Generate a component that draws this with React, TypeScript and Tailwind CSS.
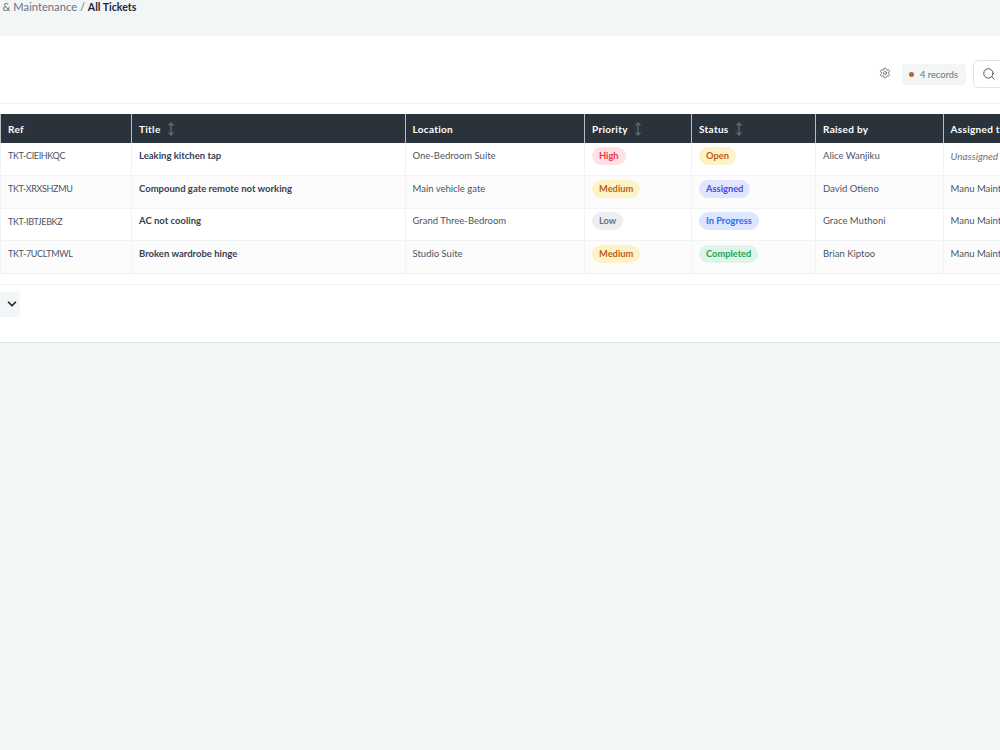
import { ChevronDown, Search, Settings } from 'lucide-react';

type Ticket = {
    ref: string;
    title: string;
    location: string;
    priority: string;
    status: string;
    raisedBy: string;
    assigned: string;
};

const tickets: Ticket[] = [
    { ref: 'TKT-CIEIHKQC', title: 'Leaking kitchen tap', location: 'One-Bedroom Suite', priority: 'High', status: 'Open', raisedBy: 'Alice Wanjiku', assigned: 'Unassigned' },
    { ref: 'TKT-XRXSHZMU', title: 'Compound gate remote not working', location: 'Main vehicle gate', priority: 'Medium', status: 'Assigned', raisedBy: 'David Otieno', assigned: 'Manu Maintenance' },
    { ref: 'TKT-IBTJEBKZ', title: 'AC not cooling', location: 'Grand Three-Bedroom', priority: 'Low', status: 'In Progress', raisedBy: 'Grace Muthoni', assigned: 'Manu Maintenance' },
    { ref: 'TKT-7UCLTMWL', title: 'Broken wardrobe hinge', location: 'Studio Suite', priority: 'Medium', status: 'Completed', raisedBy: 'Brian Kiptoo', assigned: 'Manu Maintenance' },
];

const badgeColors: Record<string, string> = {
    High: 'bg-[#fee2e5] text-[#ef3348]',
    Medium: 'bg-[#fef3c7] text-[#b8621a]',
    Low: 'bg-[#eceef1] text-[#6b7280]',
    Open: 'bg-[#fef3c7] text-[#b8621a]',
    Assigned: 'bg-[#e2e5ff] text-[#4f46e5]',
    'In Progress': 'bg-[#dbe7fe] text-[#2f6bf0]',
    Completed: 'bg-[#dff5e7] text-[#1fa34f]',
};

const Badge = (props: { label: string }) => (
    <span className={`inline-block h-[18px] rounded-full px-[7px] align-middle text-[9.3px] leading-[18px] font-bold ${badgeColors[props.label]}`}>
        {props.label}
    </span>
);

const SortIcon = () => (
    <svg viewBox="0 0 8 14" className="h-[14px] w-[8px] text-[#5f6770]" fill="none" stroke="currentColor" strokeWidth="1.4">
        <path d="M4 1v12M1.5 3.5 4 1l2.5 2.5M1.5 10.5 4 13l2.5-2.5" />
    </svg>
);

const Head = (props: { label: string; sort?: boolean }) => (
    <th className="border-x border-[#b9bec4] px-[7px] pt-[1px] text-left align-middle text-[10px] font-bold tracking-[0.3px] text-white">
        <span className="flex items-center gap-[6px] whitespace-nowrap">
            {props.label}
            {props.sort && <SortIcon />}
        </span>
    </th>
);

const cell = 'border-x border-[#f1f3f5] px-[7px] pb-[6px] align-middle text-[9.5px] whitespace-nowrap text-[#4b5563]';

export default function App() {
    return (
        <div className="h-[750px] w-[1000px] overflow-hidden bg-[#f2f6f7] font-['Lato',sans-serif]">
            <div className="flex h-[36px] items-start text-[11.2px] leading-[14px] whitespace-nowrap">
                <span className="-ml-[45px] text-[#6b7280]">Requests &amp; Maintenance&nbsp;/&nbsp;</span>
                <span className="text-[10.6px] font-bold text-[#1f2937]">All Tickets</span>
            </div>

            <div className="h-[307px] border-b border-[#e5e8eb] bg-white">
                <div className="flex h-[68px] items-center justify-end border-b border-[#eff1f3] pt-[8px]">
                    <Settings className="mr-[11px] -mt-[1px] size-[12px] text-[#4b5563]" strokeWidth={1.5} />
                    <div className="mt-[2px] flex h-[21px] w-[64px] items-center gap-[6px] rounded-[4px] bg-[#f2f6f7] pl-[7px] text-[9.3px] text-[#6b7280]">
                        <span className="size-[5px] rounded-full bg-[#c2622b]" />
                        4 records
                    </div>
                    <div className="-mr-[10px] ml-[7px] flex h-[28px] w-[37px] items-center rounded-l-[5px] border border-[#dfe3e7] pl-[8px]">
                        <Search className="size-[14px] text-[#4b5563]" strokeWidth={1.7} />
                    </div>
                </div>

                <div className="mt-[10px] overflow-hidden">
                    <table className="w-[1100px] table-fixed border-collapse border-b border-[#e5e8eb]">
                        <colgroup>
                            <col className="w-[131px]" />
                            <col className="w-[273.5px]" />
                            <col className="w-[179.5px]" />
                            <col className="w-[107px]" />
                            <col className="w-[124px]" />
                            <col className="w-[127.5px]" />
                            <col className="w-[157.5px]" />
                        </colgroup>
                        <thead>
                            <tr className="h-[29px] bg-[#2a323c]">
                                <Head label="Ref" />
                                <Head label="Title" sort />
                                <Head label="Location" />
                                <Head label="Priority" sort />
                                <Head label="Status" sort />
                                <Head label="Raised by" />
                                <Head label="Assigned to" />
                            </tr>
                        </thead>
                        <tbody>
                            {tickets.map((t, i) => (
                                <tr key={t.ref} className={`h-[32.5px] border-b border-[#f1f3f5] ${i % 2 === 1 ? 'bg-[#fcfcfd]' : 'bg-white'}`}>
                                    <td className={`${cell} text-[9px] tracking-[-0.35px]`}>{t.ref}</td>
                                    <td className={`${cell} font-bold text-[#374151]`}>{t.title}</td>
                                    <td className={cell}>{t.location}</td>
                                    <td className={cell}>
                                        <Badge label={t.priority} />
                                    </td>
                                    <td className={cell}>
                                        <Badge label={t.status} />
                                    </td>
                                    <td className={cell}>{t.raisedBy}</td>
                                    <td className={t.assigned === 'Unassigned' ? `${cell} text-[10px] italic text-[#6b7280]` : cell}>{t.assigned}</td>
                                </tr>
                            ))}
                        </tbody>
                    </table>
                </div>

                <div className="mt-[10px] border-t border-[#eff1f3] pt-[7px]">
                    <div className="flex h-[25px] w-[20px] items-center justify-end rounded-r-[4px] bg-[#f2f6f7] pr-[1px]">
                        <ChevronDown className="size-[14px] text-[#1f2937]" strokeWidth={3} />
                    </div>
                </div>
            </div>
        </div>
    );
}
